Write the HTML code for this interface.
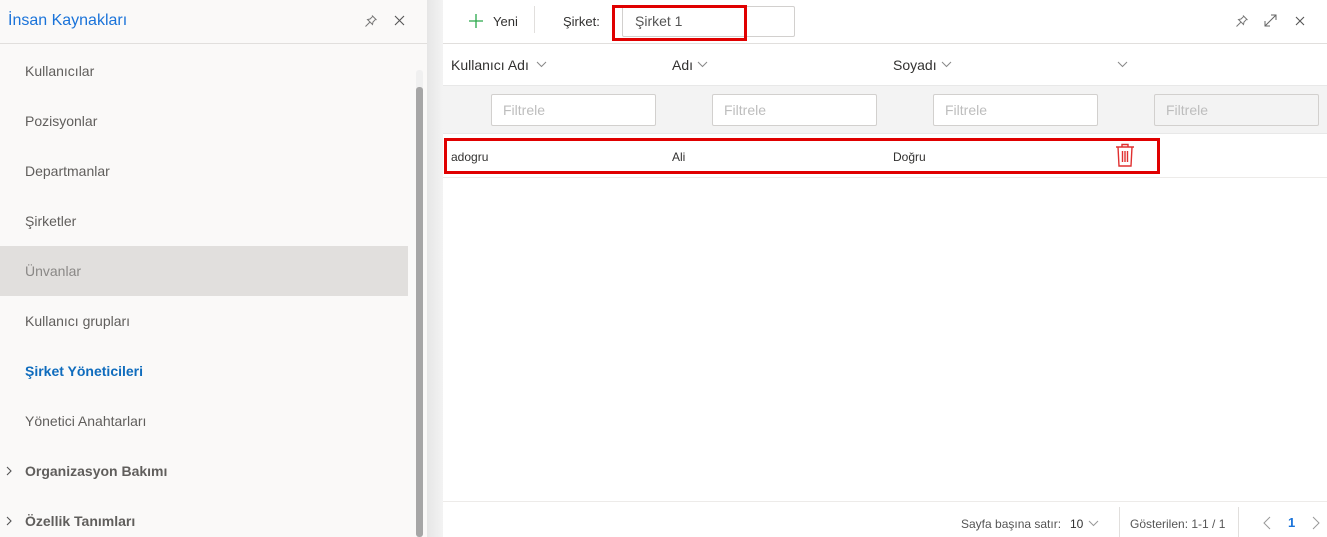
<!DOCTYPE html>
<html><head><meta charset="utf-8"><style>
*{box-sizing:border-box;margin:0;padding:0}
body{width:1327px;height:537px;overflow:hidden;font-family:"Segoe UI","Liberation Sans","DejaVu Sans",sans-serif;background:#fff;position:relative;color:#323130}
.a{position:absolute}
#side{left:0;top:0;width:427px;height:537px;background:#faf9f8}
.item{position:absolute;left:25px;font-size:14px;color:#605e5c}
.grp{position:absolute;left:25px;font-size:14px;font-weight:bold;color:#605e5c}
.hdr{font-size:14px;color:#323130}
.fi{position:absolute;top:94px;width:165px;height:32px;border:1px solid #d2d0ce;background:#fff;border-radius:2px;font-size:14px;color:#bdbdbd;padding:7px 11px}
.cell{position:absolute;top:150px;font-size:12px;color:#323130}
</style></head><body>
<div id="side" class="a">
 <div class="a" style="left:8px;top:12px;font-size:16px;color:#1a73d9">İnsan Kaynakları</div>
 <svg class="a" style="left:364px;top:14px" width="14" height="14" viewBox="0 0 14 14" fill="none" stroke="#777" stroke-width="1"><path d="M8 1.5l4.5 4.5M8.8 2.3L6 5 3.5 5.5 8.5 10.5 9 8 11.7 5.2M6 8L1.5 12.5"/></svg>
 <svg class="a" style="left:394px;top:15px" width="11" height="11" viewBox="0 0 11 11" stroke="#555" stroke-width="1.1"><path d="M1 1l9 9M10 1l-9 9"/></svg>
 <div class="a" style="left:0;top:43px;width:427px;height:1px;background:#e1dfdd"></div>
 <div class="a" style="left:0;top:246px;width:408px;height:50px;background:#e1dfdd"></div>
 <div class="item" style="top:63px">Kullanıcılar</div>
 <div class="item" style="top:113px">Pozisyonlar</div>
 <div class="item" style="top:163px">Departmanlar</div>
 <div class="item" style="top:213px">Şirketler</div>
 <div class="item" style="top:263px;color:#8a8886">Ünvanlar</div>
 <div class="item" style="top:313px">Kullanıcı grupları</div>
 <div class="item" style="top:363px;color:#0f6cbd;font-weight:bold">Şirket Yöneticileri</div>
 <div class="item" style="top:413px">Yönetici Anahtarları</div>
 <svg class="a" style="left:5px;top:466px" width="8" height="10" viewBox="0 0 8 10" fill="none" stroke="#555" stroke-width="1.1"><path d="M2 1l4 4-4 4"/></svg>
 <div class="grp" style="top:463px">Organizasyon Bakımı</div>
 <svg class="a" style="left:5px;top:516px" width="8" height="10" viewBox="0 0 8 10" fill="none" stroke="#555" stroke-width="1.1"><path d="M2 1l4 4-4 4"/></svg>
 <div class="grp" style="top:513px">Özellik Tanımları</div>
 <div class="a" style="left:416px;top:70px;width:7px;height:467px;background:#f0f0f0;border-radius:3px"></div>
 <div class="a" style="left:416px;top:87px;width:7px;height:450px;background:#a6a6a6;border-radius:3px"></div>
</div>
<div class="a" style="left:427px;top:0;width:16px;height:537px;background:linear-gradient(90deg,#e6e6e6,#f3f3f3)"></div>
<div class="a" style="left:443px;top:0;width:884px;height:537px;background:#fff">
 <svg class="a" style="left:25px;top:13px" width="16" height="16" viewBox="0 0 16 16" stroke="#2aa84a" stroke-width="1.3"><path d="M8 1v14M1 8h14"/></svg>
 <div class="a" style="left:50px;top:14px;font-size:13px">Yeni</div>
 <div class="a" style="left:91px;top:6px;width:1px;height:27px;background:#e1dfdd"></div>
 <div class="a" style="left:120px;top:14px;font-size:13px">Şirket:</div>
 <div class="a" style="left:179px;top:6px;width:173px;height:31px;border:1px solid #d2d0ce;border-radius:2px"></div>
 <div class="a" style="left:169px;top:5px;width:135px;height:36px;border:3px solid #e00000"></div>
 <div class="a" style="left:192px;top:13px;font-size:14px;color:#555">Şirket 1</div>
 <svg class="a" style="left:792px;top:14px" width="14" height="14" viewBox="0 0 14 14" fill="none" stroke="#777" stroke-width="1"><path d="M8 1.5l4.5 4.5M8.8 2.3L6 5 3.5 5.5 8.5 10.5 9 8 11.7 5.2M6 8L1.5 12.5"/></svg>
 <svg class="a" style="left:821px;top:14px" width="13" height="13" viewBox="0 0 13 13" fill="none" stroke="#666" stroke-width="1"><path d="M1 12L12 1M7 1h5v5M1 7v5h5"/></svg>
 <svg class="a" style="left:852px;top:16px" width="10" height="10" viewBox="0 0 10 10" stroke="#555" stroke-width="1.1"><path d="M1 1l8 8M9 1l-8 8"/></svg>
 <div class="a" style="left:0;top:43px;width:884px;height:1px;background:#e1dfdd"></div>
 <div class="a hdr" style="left:8px;top:57px">Kullanıcı Adı</div>
 <div class="a hdr" style="left:229px;top:57px">Adı</div>
 <div class="a hdr" style="left:450px;top:57px">Soyadı</div>
 <svg class="a" style="left:93px;top:61px" width="11" height="7" viewBox="0 0 11 7" fill="none" stroke="#888"><path d="M1 1l4.5 4.5L10 1"/></svg>
 <svg class="a" style="left:254px;top:61px" width="11" height="7" viewBox="0 0 11 7" fill="none" stroke="#888"><path d="M1 1l4.5 4.5L10 1"/></svg>
 <svg class="a" style="left:498px;top:61px" width="11" height="7" viewBox="0 0 11 7" fill="none" stroke="#888"><path d="M1 1l4.5 4.5L10 1"/></svg>
 <svg class="a" style="left:674px;top:61px" width="11" height="7" viewBox="0 0 11 7" fill="none" stroke="#888"><path d="M1 1l4.5 4.5L10 1"/></svg>
 <div class="a" style="left:0;top:85px;width:884px;height:49px;background:#f3f3f3;border-top:1px solid #e8e8e8;border-bottom:1px solid #e8e8e8"></div>
 <div class="fi" style="left:48px">Filtrele</div>
 <div class="fi" style="left:269px">Filtrele</div>
 <div class="fi" style="left:490px">Filtrele</div>
 <div class="fi" style="left:711px;background:#f3f3f3">Filtrele</div>
 <div class="cell" style="left:8px">adogru</div>
 <div class="cell" style="left:229px">Ali</div>
 <div class="cell" style="left:450px">Doğru</div>
 <svg class="a" style="left:672px;top:143px" width="20" height="24" viewBox="0 0 20 24" fill="none" stroke="#e03030" stroke-width="1.4"><path d="M1 4h18M7 4V1.5h6V4M3 4l1 19h12l1-19M7.5 8v11M10 8v11M12.5 8v11"/></svg>
 <div class="a" style="left:1px;top:138px;width:716px;height:36px;border:3px solid #e00000"></div>
 <div class="a" style="left:0;top:177px;width:884px;height:1px;background:#edebe9"></div>
 <div class="a" style="left:0;top:501px;width:884px;height:1px;background:#edebe9"></div>
 <div class="a" style="left:518px;top:517px;font-size:12px;color:#555">Sayfa başına satır:</div>
 <div class="a" style="left:627px;top:517px;font-size:12px;color:#333">10</div>
 <svg class="a" style="left:645px;top:520px" width="11" height="7" viewBox="0 0 11 7" fill="none" stroke="#999"><path d="M1 1l4.5 4.5L10 1"/></svg>
 <div class="a" style="left:676px;top:507px;width:1px;height:30px;background:#e1dfdd"></div>
 <div class="a" style="left:687px;top:517px;font-size:12px;color:#555">Gösterilen: 1-1 / 1</div>
 <div class="a" style="left:795px;top:507px;width:1px;height:30px;background:#e1dfdd"></div>
 <svg class="a" style="left:820px;top:516px" width="8" height="14" viewBox="0 0 8 14" fill="none" stroke="#999"><path d="M7 1L1 7l6 6"/></svg>
 <div class="a" style="left:845px;top:515px;font-size:13px;font-weight:bold;color:#1a73d9">1</div>
 <svg class="a" style="left:869px;top:516px" width="8" height="14" viewBox="0 0 8 14" fill="none" stroke="#999"><path d="M1 1l6 6-6 6"/></svg>
</div>
</body></html>
